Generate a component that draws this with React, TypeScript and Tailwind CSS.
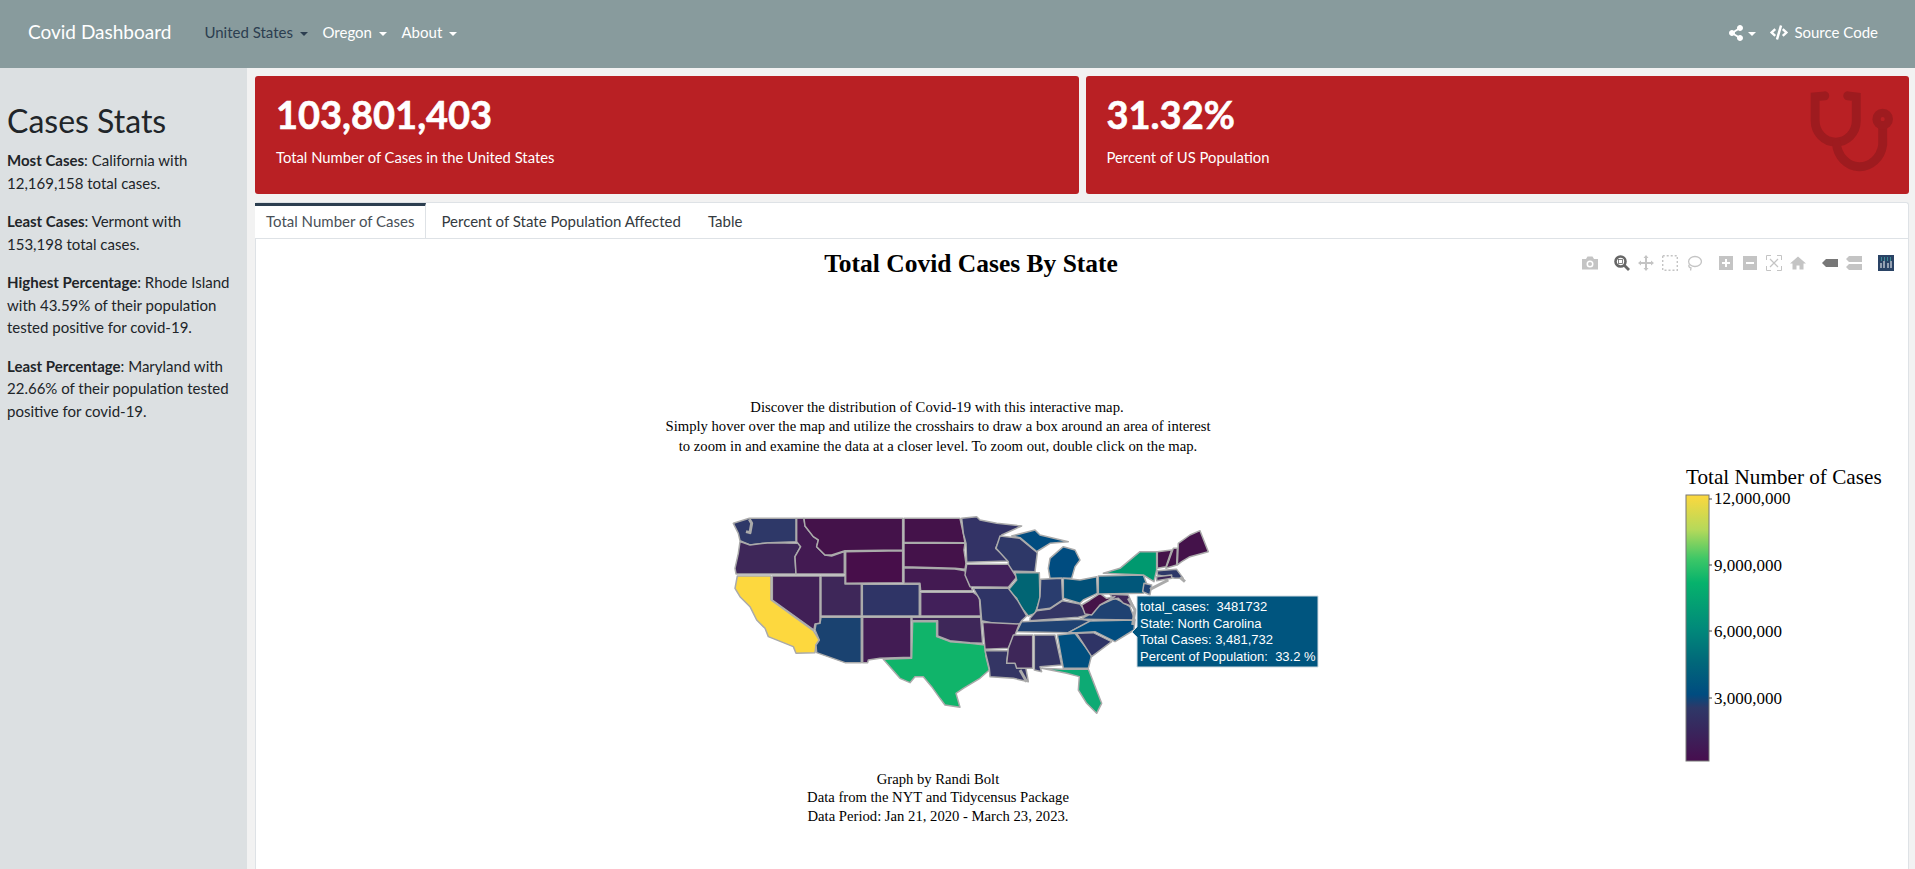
import { FaShareAlt, FaCode } from "react-icons/fa";

// West half of the map, traced at 3x from (710,500)
const WEST: [string, string][] = [
  ["#2e3868", "70,70 118,55 258,55 258,125 180,128 120,135 90,122 85,100"],
  ["#3e2759", "90,125 120,135 180,128 265,130 272,140 255,170 258,222 78,222 75,205 85,160"],
  ["#431a52", "260,55 282,55 285,78 310,110 325,120 320,140 345,165 365,168 403,155 403,222 258,222 255,170 272,140 260,125"],
  ["#44124a", "282,55 578,55 578,150 405,152 365,165 345,165 320,140 325,120 310,110 285,78"],
  ["#470e4a", "407,155 578,152 578,248 407,250"],
  ["#44124a", "582,55 750,55 760,100 765,128 582,127"],
  ["#44124a", "582,130 765,130 762,150 768,190 765,208 735,205 582,200"],
  ["#431a52", "582,203 735,207 765,212 775,240 788,272 632,272 630,250 582,250"],
  ["#2f3466", "457,253 628,253 628,348 457,348"],
  ["#42205a", "632,277 790,277 808,290 812,348 632,348"],
  ["#3e2759", "333,228 405,228 405,252 454,252 454,348 333,348"],
  ["#412056", "187,228 330,228 330,370 315,372 312,390 187,300"],
  ["#fdd83e", "82,228 183,228 183,300 310,392 328,420 318,435 315,458 258,460 250,440 175,410 165,385 140,360 120,320 90,290 75,265"],
  ["#1a4270", "333,352 454,352 454,488 405,488 320,458 318,435 328,420 315,390 318,372 330,370"],
  ["#421c54", "458,352 603,352 603,472 510,475 475,480 473,488 458,488"],
  ["#10b46a", "608,365 680,365 680,410 720,425 780,430 825,435 828,470 838,510 810,535 760,565 738,580 750,622 705,615 690,595 665,560 640,530 615,530 600,548 570,535 520,478 605,475"],
  ["#3e2759", "606,352 812,352 818,430 780,428 720,422 683,408 683,362 606,362"],
];

// East half, traced at 3x from (980,500)
const EAST: [string, string][] = [
  ["#333366", "-55,55 -10,50 0,60 50,70 125,78 65,105 47,145 90,183 -40,187 -42,130 -50,100"],
  ["#2e3868", "60,108 120,115 172,158 165,215 85,213 85,185 48,145"],
  ["#004c80", "95,108 165,90 180,105 265,125 210,130 178,150 170,155 120,113"],
  ["#004c80", "210,175 250,140 285,150 300,180 285,200 275,235 210,235 205,205"],
  ["#42205a", "-40,193 85,193 110,232 85,262 -30,260 -45,225"],
  ["#016574", "105,218 178,218 180,300 165,340 145,348 118,315 110,295 85,270 110,240"],
  ["#2a3d6e", "182,238 245,235 248,300 210,325 170,330 180,290"],
  ["#015078", "250,235 300,240 350,230 352,280 310,300 300,310 250,295"],
  ["#343564", "150,355 170,332 210,327 248,302 300,312 325,345 295,352 150,362"],
  ["#1f4272", "110,395 125,365 300,358 335,362 265,398"],
  ["#2f3466", "-20,265 85,265 112,300 140,348 125,362 110,385 5,362 0,300"],
  ["#412056", "8,367 118,372 105,405 85,445 15,448"],
  ["#343564", "15,452 85,452 80,490 135,490 145,545 100,535 30,530 28,505"],
  ["#3e2759", "100,405 158,405 158,505 110,505 105,490 80,490 85,445"],
  ["#343564", "163,405 225,405 245,495 180,500 185,515 163,510"],
  ["#004f7f", "232,405 285,400 335,465 325,505 250,505"],
  ["#0daa74", "185,505 250,508 325,507 365,610 350,640 320,610 295,570 298,530 260,520"],
  ["#2f3466", "290,400 340,398 395,425 335,470"],
  ["#004d80", "265,398 330,363 465,360 462,390 405,425 345,395 290,398"],
  ["#1f4272", "300,358 325,345 360,315 405,295 425,305 450,320 465,360"],
  ["#3e2759", "390,283 445,285 460,320 430,310 415,295 400,298"],
  ["#451448", "305,315 330,300 360,280 380,295 405,290 360,315 335,345 315,342"],
  ["#01577a", "355,228 490,225 505,265 490,280 355,282"],
  ["#00996f", "370,220 420,205 480,155 530,155 530,210 522,245 490,225"],
  ["#44124a", "595,130 630,105 660,92 685,155 630,170 605,185 592,195"],
  ["#44124a", "580,145 592,145 590,195 558,205"],
  ["#44124a", "532,155 575,150 558,200 532,205"],
  ["#2e3868", "532,212 590,208 610,235 585,235 532,225"],
  ["#3e2759", "530,230 575,225 575,235 530,242"],
  ["#1f4272", "492,250 515,255 510,285 488,275"],
];

// Thin coastal shapes that the map draws as solid outline
const COAST_WEST = ["M118 58 L125 70 L120 98 L108 95"];
const COAST_EAST = [
  "M510 268 L565 240",
  "M600 232 L615 245",
  "M445 295 L465 330 L458 375",
  "M120 510 L140 545",
];

const STATS = [
  { label: "Most Cases", text: ": California with 12,169,158 total cases." },
  { label: "Least Cases", text: ": Vermont with 153,198 total cases." },
  { label: "Highest Percentage", text: ": Rhode Island with 43.59% of their population tested positive for covid-19." },
  { label: "Least Percentage", text: ": Maryland with 22.66% of their population tested positive for covid-19." },
];

function Caret() {
  return <span className="ml-[7px] inline-block border-x-[4.5px] border-t-[4.5px] border-x-transparent border-t-current align-middle" />;
}

function ValueBox({ value, label, icon }: { value: string; label: string; icon?: boolean }) {
  return (
    <div className="relative h-[118px] flex-1 overflow-hidden rounded-[3px] bg-[#b92024] px-[21px] pt-[16px] text-white">
      <div className="text-[38px] leading-[1.2] font-bold [-webkit-text-stroke:0.6px_white]">{value}</div>
      <div className="mt-[8px] text-[14.8px] leading-[22px]">{label}</div>
      {icon && (
        <svg viewBox="940 270 245 245" className="absolute top-[14px] right-[15px] h-[84px] w-[84px]" fill="none" stroke="#9e1b1f" strokeWidth="26" strokeLinecap="round">
          <path d="M983 287 L955 290 V360 A60 62 0 0 0 1075 360 V290 L1050 287" />
          <path d="M1017 425 A68 75 0 0 0 1152 430 V375" />
          <circle cx="1152" cy="355" r="18" strokeWidth="24" />
        </svg>
      )}
    </div>
  );
}

function ModeIcon({ children }: { children: React.ReactNode }) {
  return (
    <svg viewBox="0 0 16 16" className="h-4 w-4" fill="#c4c4c4">
      {children}
    </svg>
  );
}

function ModeBar() {
  return (
    <div className="absolute top-[16px] right-[14px] flex gap-4">
      <div className="flex gap-2">
        <ModeIcon>
          <path fillRule="evenodd" d="M0 4 H4 L5.5 1.5 H10.5 L12 4 H16 V14.5 H0 Z M8 5.5 A3.5 3.5 0 1 0 8 12.5 A3.5 3.5 0 1 0 8 5.5 Z" />
          <circle cx="8" cy="9" r="2" />
        </ModeIcon>
      </div>
      <div className="flex gap-2">
        <ModeIcon>
          <circle cx="6.5" cy="6.5" r="5" fill="none" stroke="#666" strokeWidth="2.6" />
          <rect x="4.5" y="4.5" width="4" height="4" fill="none" stroke="#666" strokeWidth="0.8" />
          <path d="M10 10 L15 15" stroke="#666" strokeWidth="2.8" />
        </ModeIcon>
        <ModeIcon>
          <path d="M8 0 L10.5 3 H9 V7 H13 V5.5 L16 8 L13 10.5 V9 H9 V13 H10.5 L8 16 L5.5 13 H7 V9 H3 V10.5 L0 8 L3 5.5 V7 H7 V3 H5.5 Z" />
        </ModeIcon>
        <ModeIcon>
          <rect x="0.7" y="0.7" width="14.6" height="14.6" fill="none" stroke="#c4c4c4" strokeWidth="1.4" strokeDasharray="2 2" />
        </ModeIcon>
        <ModeIcon>
          <ellipse cx="9" cy="6.5" rx="6.4" ry="5" fill="none" stroke="#c4c4c4" strokeWidth="1.3" />
          <path d="M3.5 9.5 C2 11 3 12.5 5 13 L4.5 15.5" fill="none" stroke="#c4c4c4" strokeWidth="1.3" />
        </ModeIcon>
      </div>
      <div className="flex gap-2">
        <ModeIcon>
          <path fillRule="evenodd" d="M1 1 H15 V15 H1 Z M7 4 V7 H4 V9 H7 V12 H9 V9 H12 V7 H9 V4 Z" />
        </ModeIcon>
        <ModeIcon>
          <path fillRule="evenodd" d="M1 1 H15 V15 H1 Z M4 7 V9 H12 V7 Z" />
        </ModeIcon>
        <ModeIcon>
          <path d="M0.5 5 V0.5 H5 M11 0.5 H15.5 V5 M15.5 11 V15.5 H11 M5 15.5 H0.5 V11" fill="none" stroke="#c4c4c4" strokeWidth="1" />
          <path d="M4 4 L12 12 M12 4 L4 12" stroke="#c4c4c4" strokeWidth="1.2" />
        </ModeIcon>
        <ModeIcon>
          <path d="M8 1.5 L16 8.5 H13.5 V14.5 H9.5 V10.5 H6.5 V14.5 H2.5 V8.5 H0 Z" />
        </ModeIcon>
      </div>
      <div className="flex gap-2">
        <ModeIcon>
          <path d="M0 8 L4 4 H16 V12 H4 Z" fill="#777" />
        </ModeIcon>
        <ModeIcon>
          <path d="M3 1 H16 V7 H3 L0 4 Z M3 9 H16 V15 H3 L0 12 Z" />
        </ModeIcon>
      </div>
      <svg viewBox="0 0 16 16" className="h-4 w-4">
        <rect width="16" height="16" fill="#2a4365" />
        <path d="M3 8 V13 M6 6 V13 M10 8 V13 M13 6 V13" stroke="#fff" strokeWidth="1" />
        <path d="M3 3 H13" stroke="#4fd1c5" strokeWidth="1" strokeDasharray="1 2" />
        <path d="M3 5 H13" stroke="#4fd1c5" strokeWidth="1" strokeDasharray="1 2" />
      </svg>
    </div>
  );
}

const SERIF = { fontFamily: '"Liberation Serif", serif' };
const ARIAL = { fontFamily: '"Liberation Sans", Arial, sans-serif' };

function StateGroup({ x, states, coast }: { x: number; states: [string, string][]; coast: string[] }) {
  return (
    <g transform={`translate(${x} 500) scale(0.3333)`} stroke="#aaaaaa" strokeWidth="4.5" strokeLinejoin="round">
      {states.map(([fill, points]) => (
        <polygon key={points} fill={fill} points={points} />
      ))}
      {coast.map((d) => (
        <path key={d} d={d} fill="none" strokeWidth="9" />
      ))}
    </g>
  );
}

function CasesChart() {
  return (
    <svg viewBox="256 239 1651 630" className="block h-[630px] w-[1651px]" style={SERIF}>
      <defs>
        <linearGradient id="viridis" x1="0" y1="0" x2="0" y2="1">
          <stop offset="0" stopColor="#fdd83e" />
          <stop offset="0.13" stopColor="#b5d95a" />
          <stop offset="0.24" stopColor="#3dc767" />
          <stop offset="0.33" stopColor="#06b26c" />
          <stop offset="0.5" stopColor="#018a7a" />
          <stop offset="0.63" stopColor="#01677a" />
          <stop offset="0.75" stopColor="#004c80" />
          <stop offset="0.8" stopColor="#2e3868" />
          <stop offset="1" stopColor="#470e4e" />
        </linearGradient>
      </defs>

      <text x="971" y="272" textAnchor="middle" fontSize="25.5" fontWeight="700">Total Covid Cases By State</text>

      <g fontSize="14.67" textAnchor="middle">
        <text x="937" y="412">Discover the distribution of Covid-19 with this interactive map.</text>
        <text x="938" y="431">Simply hover over the map and utilize the crosshairs to draw a box around an area of interest</text>
        <text x="938" y="451">to zoom in and examine the data at a closer level. To zoom out, double click on the map.</text>
        <text x="938" y="784">Graph by Randi Bolt</text>
        <text x="938" y="802">Data from the NYT and Tidycensus Package</text>
        <text x="938" y="821">Data Period: Jan 21, 2020 - March 23, 2023.</text>
      </g>

      <StateGroup x={710} states={WEST} coast={COAST_WEST} />
      <StateGroup x={980} states={EAST} coast={COAST_EAST} />

      <g style={ARIAL} fontSize="13" fill="#fff">
        <path d="M1137 596 H1318 V667 H1137 V637 L1132 632 L1137 627 Z" fill="#00557f" stroke="#d0dbe2" strokeWidth="1" />
        <text x="1140" y="611" xmlSpace="preserve">total_cases:  3481732</text>
        <text x="1140" y="628">State: North Carolina</text>
        <text x="1140" y="644">Total Cases: 3,481,732</text>
        <text x="1140" y="661" xmlSpace="preserve">Percent of Population:  33.2 %</text>
      </g>

      <text x="1686" y="484" fontSize="21.2">Total Number of Cases</text>
      <rect x="1686" y="495" width="23" height="266" fill="url(#viridis)" stroke="#777" strokeWidth="1" />
      <g fontSize="17">
        {[
          ["12,000,000", 504, 499],
          ["9,000,000", 571, 565],
          ["6,000,000", 637, 631],
          ["3,000,000", 704, 698],
        ].map(([label, y, tick]) => (
          <g key={label as string}>
            <path d={`M1709 ${tick} h3`} stroke="#444" strokeWidth="1" />
            <text x="1714" y={y as number}>{label}</text>
          </g>
        ))}
      </g>
    </svg>
  );
}

export default function App() {
  return (
    <div className="flex h-screen flex-col overflow-hidden bg-[#f2f2f2] text-[15px] leading-[22.5px] text-[#212529]" style={{ fontFamily: "Lato, sans-serif" }}>
      <nav className="flex h-[68px] shrink-0 items-center bg-[#889b9d] pr-[37px] pb-[3px] pl-[28px] text-white">
        <span className="mr-[33px] text-[19px]">Covid Dashboard</span>
        <div className="flex gap-[14.5px]">
          <span className="text-[#2c3e50]">United States<Caret /></span>
          <span>Oregon<Caret /></span>
          <span>About<Caret /></span>
        </div>
        <div className="ml-auto flex items-center gap-[14px]">
          <span className="flex items-center">
            <FaShareAlt className="h-[16px] w-[16px]" />
            <span className="ml-[-3px]"><Caret /></span>
          </span>
          <span className="flex items-center gap-[6px]">
            <FaCode className="h-[15px] w-[18px]" />
            Source Code
          </span>
        </div>
      </nav>

      <div className="flex min-h-0 flex-1">
        <aside className="w-[247px] shrink-0 bg-[#dce0e2] pt-[34px] pr-[10px] pl-[7px]">
          <h2 className="mb-[9px] text-[32px] leading-[38px]">Cases Stats</h2>
          {STATS.map((stat) => (
            <p key={stat.label} className="mb-[16px]">
              <strong>{stat.label}</strong>
              {stat.text}
            </p>
          ))}
        </aside>

        <main className="flex min-w-0 flex-1 flex-col gap-[8px] pt-[8px] pr-[6px] pl-[8px]">
          <div className="flex gap-[7px]">
            <ValueBox value="103,801,403" label="Total Number of Cases in the United States" />
            <ValueBox value="31.32%" label="Percent of US Population" icon />
          </div>

          <div className="flex-1 rounded-t-[3px] border border-b-0 border-[#dee2e6] bg-white">
            <div className="flex h-[36px] border-b border-[#dee2e6]">
              <div className="-ml-px border-t-[3px] border-r border-t-[#2c3e50] border-r-[#dee2e6] bg-white px-[11px] pt-[4px] text-[#495057]">Total Number of Cases</div>
              <div className="px-[15px] pt-[7px] text-[#343a40]">Percent of State Population Affected</div>
              <div className="px-[12px] pt-[7px] text-[#343a40]">Table</div>
            </div>
            <div className="relative">
              <ModeBar />
              <CasesChart />
            </div>
          </div>
        </main>
      </div>
    </div>
  );
}
